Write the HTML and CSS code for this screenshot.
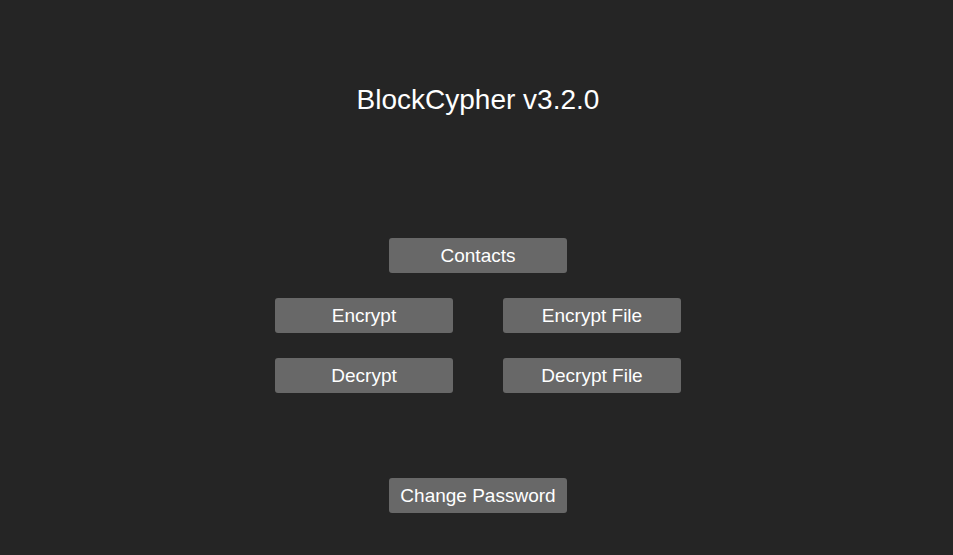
FILE: index.html
```html
<!DOCTYPE html>
<html>
<head>
<meta charset="utf-8">
<link rel="stylesheet" href="styles.css">
</head>
<body>
<main class="app">
  <h1 class="title">BlockCypher v3.2.0</h1>
  <div class="menu">
    <button class="btn">Contacts</button>
    <div class="grid">
      <button class="btn">Encrypt</button>
      <button class="btn">Encrypt File</button>
      <button class="btn">Decrypt</button>
      <button class="btn">Decrypt File</button>
    </div>
  </div>
  <button class="btn btn-bottom">Change Password</button>
</main>
</body>
</html>
```
FILE: styles.css
```css
html, body {
  margin: 0;
  padding: 0;
  background: #252525;
  height: 100%;
}
.app {
  display: flex;
  flex-direction: column;
  align-items: center;
  padding-left: 3px;
  font-family: "Liberation Sans", Arial, sans-serif;
  color: #ffffff;
}
.title {
  margin: 85px 0 0;
  font-size: 28px;
  font-weight: normal;
  line-height: 30px;
  height: 30px;
}
.menu {
  margin-top: 123px;
  display: flex;
  flex-direction: column;
  align-items: center;
  gap: 25px;
}
.grid {
  display: grid;
  grid-template-columns: 178px 178px;
  column-gap: 50px;
  row-gap: 25px;
}
.btn {
  width: 178px;
  height: 35px;
  padding: 0;
  border: none;
  border-radius: 3px;
  background: #686868;
  color: #ffffff;
  font-family: "Liberation Sans", Arial, sans-serif;
  font-size: 19px;
  line-height: 35px;
  text-align: center;
}
.btn-bottom {
  margin-top: 85px;
}
```
